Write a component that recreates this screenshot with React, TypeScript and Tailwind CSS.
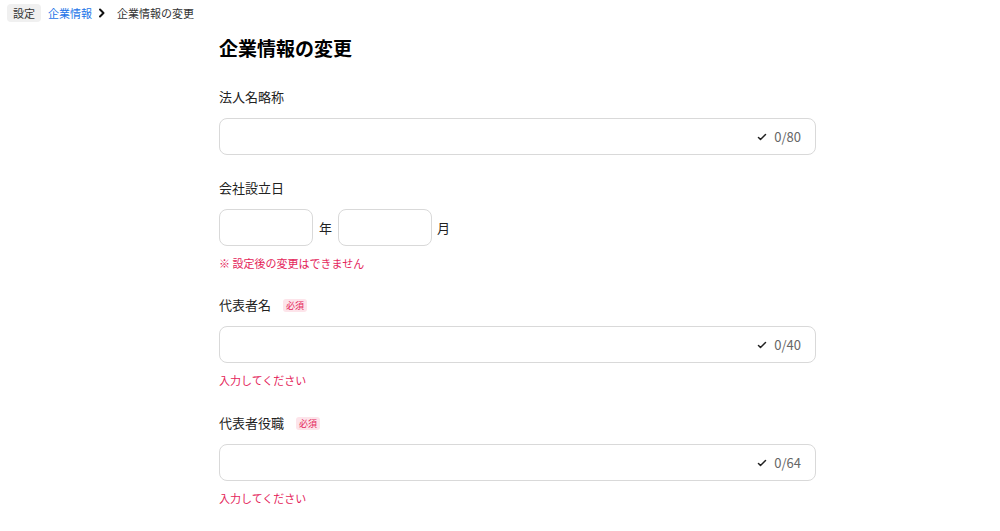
function Required() {
  return (
    <span className="ml-3 rounded-[3px] bg-[#fde4ea] px-[3px] text-[9px] leading-[13px] text-[#e4245a]">必須</span>
  );
}

function Counter({ max }: { max: number }) {
  return (
    <div className="flex items-center gap-[6px] text-[13px] text-[#666]">
      <svg width="12" height="12" viewBox="0 0 24 24" fill="none" stroke="#222" strokeWidth="3" strokeLinecap="round" strokeLinejoin="round">
        <path d="M5 13l4 4L19 7" />
      </svg>
      <span>0/{max}</span>
    </div>
  );
}

function TextInput({ max }: { max: number }) {
  return (
    <div className="flex h-[37px] items-center justify-end rounded-lg border border-[#d9d9d9] bg-white px-[14px]">
      <Counter max={max} />
    </div>
  );
}

export default function App() {
  return (
    <div className="min-h-screen bg-white text-[#222]" style={{ fontFamily: '"Noto Sans CJK JP", "Noto Sans", sans-serif' }}>
      <nav className="flex items-center px-[7px] pt-[4px] text-[11px]">
        <span className="rounded bg-[#f0f0f0] px-[6px] leading-[18px] text-[#333]">設定</span>
        <span className="ml-[7px] text-[#1a73e8]">企業情報</span>
        <svg className="ml-[5px]" width="10" height="10" viewBox="0 0 10 10" fill="none" stroke="#111" strokeWidth="2" strokeLinecap="round" strokeLinejoin="round">
          <path d="M3 1.5L6.5 5 3 8.5" />
        </svg>
        <span className="ml-[10px] text-[#333]">企業情報の変更</span>
      </nav>

      <main className="ml-[219px] w-[597px] pt-[12px]">
        <h1 className="text-[19px] font-bold leading-[28px] text-black">企業情報の変更</h1>

        <section className="mt-[25px]">
          <div className="text-[13px] leading-[20px]">法人名略称</div>
          <div className="mt-[11px]"><TextInput max={80} /></div>
        </section>

        <section className="mt-[23px]">
          <div className="text-[13px] leading-[20px]">会社設立日</div>
          <div className="mt-[11px] flex items-center">
            <div className="h-[37px] w-[94px] rounded-lg border border-[#d9d9d9]" />
            <span className="mx-[6px] text-[13px]">年</span>
            <div className="h-[37px] w-[94px] rounded-lg border border-[#d9d9d9]" />
            <span className="ml-[5px] text-[13px]">月</span>
          </div>
          <div className="mt-[8px] text-[11px] leading-[18px] text-[#e4245a]">※ 設定後の変更はできません</div>
        </section>

        <section className="mt-[23px]">
          <div className="flex h-5 items-center text-[13px] leading-[20px]">代表者名<Required /></div>
          <div className="mt-[11px]"><TextInput max={40} /></div>
          <div className="mt-[8px] text-[11px] leading-[18px] text-[#e4245a]">入力してください</div>
        </section>

        <section className="mt-[24px]">
          <div className="flex h-5 items-center text-[13px] leading-[20px]">代表者役職<Required /></div>
          <div className="mt-[11px]"><TextInput max={64} /></div>
          <div className="mt-[8px] text-[11px] leading-[18px] text-[#e4245a]">入力してください</div>
        </section>
      </main>
    </div>
  );
}
